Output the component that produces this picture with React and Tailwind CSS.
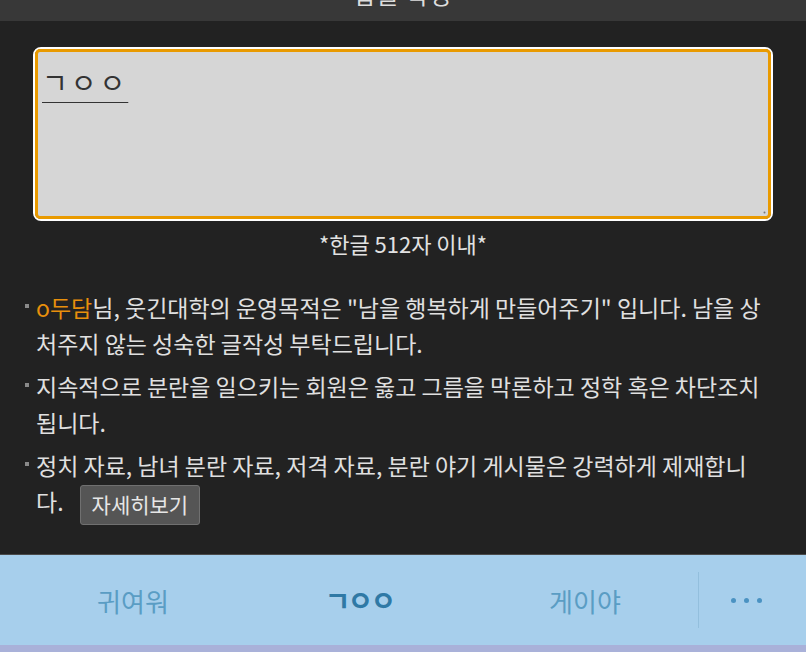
import React from "react";

const font = { fontFamily: '"Noto Sans CJK KR", "Noto Sans", sans-serif' };

const rules = [
  {
    key: "r1",
    body: (
      <>
        <span className="text-[#e8900c]">o두담</span>님, 웃긴대학의 운영목적은 "남을 행복하게 만들어주기" 입니다. 남을 상<br />처주지 않는 성숙한 글작성 부탁드립니다.
      </>
    ),
  },
  {
    key: "r2",
    body: <>지속적으로 분란을 일으키는 회원은 옳고 그름을 막론하고 정학 혹은 차단조치 됩니다.</>,
  },
  {
    key: "r3",
    body: (
      <>
        정치 자료, 남녀 분란 자료, 저격 자료, 분란 야기 게시물은 강력하게 제재합니<br />다.
        <button className="ml-[16px] h-[40px] px-[11px] align-middle bg-[#555555] border border-[#707070] rounded-[3px] text-[21px] leading-none text-[#e6e6e6]">
          자세히보기
        </button>
      </>
    ),
  },
];

export default function App() {
  return (
    <div className="w-[806px] h-[652px] flex flex-col bg-[#222222] overflow-hidden" style={font}>
      {/* top bar, title cut off by the screen edge */}
      <div className="h-[21px] shrink-0 bg-[#383838] flex justify-center overflow-hidden">
        <span className="text-[24px] leading-none -mt-[18px] text-[#dddddd] tracking-[1px]">답글 작성</span>
      </div>

      <div className="flex-1 flex flex-col">
        <div className="mt-[26px] mx-[33px] border-2 border-white rounded-[8px]">
          <div className="relative h-[170px] border-[3px] border-[#e99a00] rounded-[5px] bg-[#d6d6d6] px-[4px] pt-[10px]">
            <span className="text-[28px] tracking-[3px] leading-[40px] text-[#333333] underline decoration-1 underline-offset-[8px] decoration-[#333333]">
              ㄱㅇㅇ
            </span>
            <svg className="absolute right-[2px] bottom-[2px]" width="5" height="5" viewBox="0 0 5 5">
              <circle cx="3.5" cy="3.5" r="1" fill="#777" />
            </svg>
          </div>
        </div>

        <p className="mt-[8px] text-center text-[22px] leading-[28px] text-[#e2e2e2]">*한글 512자 이내*</p>

        <ul className="mt-[32px] pl-[25px] pr-[22px] flex flex-col gap-[7px]">
          {rules.map((r) => (
            <li key={r.key} className="flex items-start">
              <span className="mt-[15px] mr-[7px] w-[4px] h-[4px] shrink-0 bg-[#8a8a8a]" />
              <p className="text-[23px] leading-[36px] text-[#e0e0e0]">{r.body}</p>
            </li>
          ))}
        </ul>
      </div>

      {/* bottom suggestion bar */}
      <div className="shrink-0 border-t border-[#4a4a4a]">
        <div className="h-[90px] bg-[#a7cfec] flex items-center pl-[20px] text-[26px]">
          <div className="w-[226px] text-center text-[#5a9dc4]">귀여워</div>
          <div className="w-[226px] text-center font-bold text-[28px] tracking-[-3px] text-[#2f79a5]">ㄱㅇㅇ</div>
          <div className="w-[226px] text-center text-[#5a9dc4]">게이야</div>
          <div className="w-px h-[56px] bg-[#93bfdd]" />
          <div className="flex-1 flex justify-center gap-[8px] pr-[12px]">
            <span className="w-[5px] h-[5px] rounded-full bg-[#4a92c2]" />
            <span className="w-[5px] h-[5px] rounded-full bg-[#4a92c2]" />
            <span className="w-[5px] h-[5px] rounded-full bg-[#4a92c2]" />
          </div>
        </div>
        <div className="h-[7px] bg-[#a9b1d9]" />
      </div>
    </div>
  );
}
